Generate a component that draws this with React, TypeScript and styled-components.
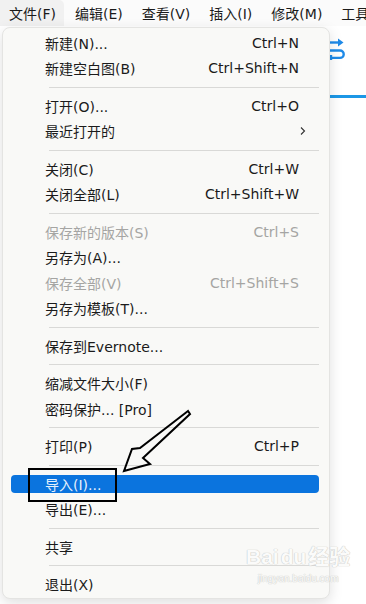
import styled, { createGlobalStyle } from "styled-components";

const GlobalStyle = createGlobalStyle`
  html, body {
    margin: 0;
    padding: 0;
    background: #ffffff;
  }
  body {
    font-family: "DejaVu Sans", "Noto Sans CJK SC", sans-serif;
    color: #1b1b1b;
  }
`;

const Page = styled.div`
  position: relative;
  width: 366px;
  height: 604px;
  overflow: hidden;
  background: #ffffff;
`;

const MenuBar = styled.div`
  display: flex;
  height: 26px;
  background: #fbfbfb;
  font-size: 14px;
`;

const BarItem = styled.div<{ $open?: boolean }>`
  display: flex;
  align-items: center;
  padding: 0 8px 0 9px;
  margin-right: 2px;
  background: ${({ $open }) => ($open ? "#f1f1f1" : "transparent")};
  border-radius: 0 5px 0 0;
  white-space: nowrap;
`;

const Workspace = styled.div`
  display: flex;
  flex-direction: column;
`;

const Toolbar = styled.div`
  display: flex;
  padding: 8px 0 0 322px;
  height: 61px;
`;

const TabLine = styled.div`
  margin-left: 330px;
  height: 3px;
  background: #1c97e6;
`;

const Dropdown = styled.div`
  position: absolute;
  left: 2px;
  top: 27px;
  width: 326px;
  padding: 2px 0 1px;
  background: #f9f9f7;
  border: 1px solid #e4e4e2;
  border-radius: 8px;
  box-shadow: 0 4px 14px rgba(0, 0, 0, 0.13);
  font-size: 14px;
  z-index: 2;
`;

const Row = styled.div<{ $disabled?: boolean; $active?: boolean }>`
  position: relative;
  display: grid;
  grid-template-columns: 1fr auto;
  align-items: center;
  height: 25.5px;
  margin: 0 10px 0 8px;
  padding: 0 20px 0 34px;
  color: ${({ $disabled, $active }) =>
    $active ? "#e6f0fc" : $disabled ? "#a5a5a3" : "#1b1b1b"};
  white-space: nowrap;

  &::before {
    content: "";
    position: absolute;
    left: 0;
    right: 0;
    top: 4px;
    bottom: 3.5px;
    border-radius: 4px;
    background: ${({ $active }) => ($active ? "#0b74de" : "transparent")};
  }

  span {
    position: relative;
  }
`;

const Shortcut = styled.span`
  text-align: right;
`;

const Chevron = styled.svg`
  position: relative;
  margin-right: -11px;
`;

const Separator = styled.div`
  height: 12px;
  display: flex;
  align-items: center;
  margin: 0 10px 0 46px;

  &::after {
    content: "";
    flex: 1;
    height: 1px;
    background: #d9d9d7;
  }
`;

const Callout = styled.div`
  position: absolute;
  left: 28px;
  top: 468px;
  width: 85px;
  height: 30px;
  border: 2px solid #000;
  z-index: 3;
`;

const Pointer = styled.svg`
  position: absolute;
  left: 110px;
  top: 400px;
  z-index: 3;
`;

const Watermark = styled.div`
  position: absolute;
  left: 246px;
  top: 544px;
  display: flex;
  flex-direction: column;
  align-items: center;
  z-index: 3;
  color: #fbfbfa;
  text-shadow: 0 0 1px #c6c6c4, 0 0 1px #c6c6c4;
  font-family: "Liberation Sans", "Noto Sans CJK SC", sans-serif;
`;

const MarkTop = styled.div`
  display: flex;
  align-items: flex-end;
  gap: 2px;
  font-size: 21px;
  font-weight: 700;
  line-height: 26px;
`;

const MarkUrl = styled.div`
  font-size: 10px;
  line-height: 12px;
  margin-top: 3px;
`;

type Entry =
  | "sep"
  | {
      label: string;
      shortcut?: string;
      disabled?: boolean;
      active?: boolean;
      submenu?: boolean;
    };

const ENTRIES: Entry[] = [
  { label: "新建(N)...", shortcut: "Ctrl+N" },
  { label: "新建空白图(B)", shortcut: "Ctrl+Shift+N" },
  "sep",
  { label: "打开(O)...", shortcut: "Ctrl+O" },
  { label: "最近打开的", submenu: true },
  "sep",
  { label: "关闭(C)", shortcut: "Ctrl+W" },
  { label: "关闭全部(L)", shortcut: "Ctrl+Shift+W" },
  "sep",
  { label: "保存新的版本(S)", shortcut: "Ctrl+S", disabled: true },
  { label: "另存为(A)..." },
  { label: "保存全部(V)", shortcut: "Ctrl+Shift+S", disabled: true },
  { label: "另存为模板(T)..." },
  "sep",
  { label: "保存到Evernote..." },
  "sep",
  { label: "缩减文件大小(F)" },
  { label: "密码保护... [Pro]" },
  "sep",
  { label: "打印(P)", shortcut: "Ctrl+P" },
  "sep",
  { label: "导入(I)...", active: true },
  { label: "导出(E)..." },
  "sep",
  { label: "共享" },
  "sep",
  { label: "退出(X)" },
];

const MENUS = ["文件(F)", "编辑(E)", "查看(V)", "插入(I)", "修改(M)", "工具(T)"];

const App = () => {
  return (
    <Page>
      <GlobalStyle />
      <MenuBar>
        {MENUS.map((m, i) => (
          <BarItem key={m} $open={i === 0}>
            {m}
          </BarItem>
        ))}
      </MenuBar>

      <Workspace>
        <Toolbar>
          <svg width="24" height="28" viewBox="0 0 24 28" fill="none">
            <path d="M2 8.5 H19" stroke="#1e8ae8" strokeWidth="2.4" />
            <path d="M16 4.5 L21.5 8.5 L16 12.5 Z" fill="#1e8ae8" />
            <path
              d="M6 16.5 H18 a3.7 3.7 0 0 1 0 7.4 H9"
              stroke="#1e8ae8"
              strokeWidth="2.4"
            />
            <path d="M9 21 V26" stroke="#1e8ae8" strokeWidth="2.4" />
          </svg>
        </Toolbar>
        <TabLine />
      </Workspace>

      <Dropdown>
        {ENTRIES.map((e, i) =>
          e === "sep" ? (
            <Separator key={i} />
          ) : (
            <Row key={i} $disabled={e.disabled} $active={e.active}>
              <span>{e.label}</span>
              {e.submenu ? (
                <Chevron width="8" height="10" viewBox="0 0 8 10">
                  <path
                    d="M2 1.5 L5.5 5 L2 8.5"
                    stroke="#333"
                    strokeWidth="1.1"
                    fill="none"
                  />
                </Chevron>
              ) : (
                <Shortcut>{e.shortcut}</Shortcut>
              )}
            </Row>
          )
        )}
      </Dropdown>

      <Callout />
      <Pointer width="90" height="80" viewBox="0 0 90 80">
        <path
          d="M78 11 L30 48 L22 49 L14 71 L40 64 L33 58 L80 14 Z"
          fill="none"
          stroke="#000"
          strokeWidth="2"
          strokeLinejoin="miter"
        />
      </Pointer>

      <Watermark>
        <MarkTop>
          <span>Bai</span>
          <span>du</span>
          <span>经验</span>
        </MarkTop>
        <MarkUrl>jingyan.baidu.com</MarkUrl>
      </Watermark>
    </Page>
  );
};

export default App;
